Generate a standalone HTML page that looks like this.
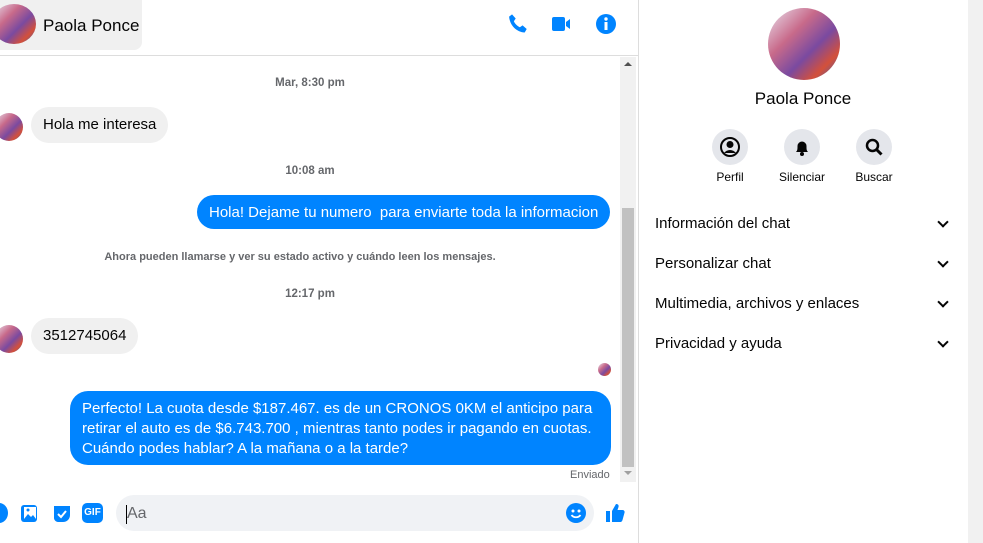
<!DOCTYPE html>
<html><head><meta charset="utf-8"><style>
*{margin:0;padding:0;box-sizing:border-box}
body{width:983px;height:543px;overflow:hidden;background:#fff;font-family:"Liberation Sans",sans-serif;position:relative;color:#050505}
.a{position:absolute}
.av{border-radius:50%;background:linear-gradient(135deg,#e9e3ef 0%,#c86a8a 35%,#7a4aa0 60%,#d4503a 80%,#3060c0 100%);overflow:hidden}
.bub{position:absolute;border-radius:18px;font-size:15px;line-height:20px;padding:8px 12px}
.in{background:#f0f0f0;color:#050505}
.out{background:#0084ff;color:#fff}
.ts{position:absolute;font-size:11.5px;color:#65676b;font-weight:bold;text-align:center;width:620px;left:0}
.row{position:absolute;left:655px;font-size:15px;color:#050505}
.chev{position:absolute;left:939px;width:8px;height:8px;border-right:2px solid #050505;border-bottom:2px solid #050505;transform:rotate(45deg)}
.btn{position:absolute;width:36px;height:36px;border-radius:50%;background:#e4e6eb;top:129px}
.lbl{position:absolute;top:170px;font-size:12px;color:#050505;text-align:center;width:80px}
</style></head><body>
<div class="a" style="left:0;top:0;width:142px;height:50px;background:#f0f0f0;border-radius:0 0 8px 0"></div>
<div class="a av" style="left:-8px;top:4px;width:44px;height:40px"></div>
<div class="a" style="left:43px;top:16px;font-size:17px">Paola Ponce</div>
<div class="a" style="left:0;top:55px;width:638px;height:1px;background:#ddd"></div>
<svg class="a" style="left:507px;top:13px" width="22" height="22" viewBox="0 0 24 24"><path fill="#0084ff" d="M5.5 1.5l4 4.5-2 3c1.2 2.8 3.7 5.3 6.5 6.5l3-2 4.5 4-2.2 3.8C10.5 21 3 13.5 2.3 4z"/></svg>
<svg class="a" style="left:551px;top:14px" width="22" height="20" viewBox="0 0 22 20"><rect x="1" y="3" width="13" height="14" rx="2" fill="#0084ff"/><path d="M15 8l4-3v10l-4-3z" fill="#0084ff"/></svg>
<svg class="a" style="left:595px;top:13px" width="22" height="22" viewBox="0 0 22 22"><circle cx="11" cy="11" r="10" fill="#0084ff"/><rect x="9.5" y="9" width="3" height="8" fill="#fff"/><circle cx="11" cy="6" r="1.7" fill="#fff"/></svg>
<div class="a" style="left:620px;top:57px;width:16px;height:425px;background:#f1f1f1"></div>
<div class="a" style="left:622px;top:208px;width:12px;height:259px;background:#c1c1c1"></div>
<div class="a" style="left:624px;top:62px;border:4px solid transparent;border-bottom:4px solid #505050;border-top:0"></div>
<div class="a" style="left:624px;top:471px;border:4px solid transparent;border-top:4px solid #a0a0a0;border-bottom:0"></div>
<div class="ts" style="top:77px">Mar, 8:30 pm</div>
<div class="a av" style="left:-5px;top:113px;width:28px;height:28px"></div>
<div class="bub in" style="left:31px;top:107px">Hola me interesa</div>
<div class="ts" style="top:165px">10:08 am</div>
<div class="bub out" style="left:197px;top:195px;height:34px">Hola! Dejame tu numero &nbsp;para enviarte toda la informacion</div>
<div class="ts" style="top:251px;font-size:11px;left:-10px">Ahora pueden llamarse y ver su estado activo y cuándo leen los mensajes.</div>
<div class="ts" style="top:288px">12:17 pm</div>
<div class="a av" style="left:-5px;top:325px;width:28px;height:28px"></div>
<div class="bub in" style="left:31px;top:318px">3512745064</div>
<div class="a av" style="left:598px;top:363px;width:13px;height:13px"></div>
<div class="bub out" style="left:70px;top:391px;width:541px;height:74px">Perfecto! La cuota desde $187.467. es de un CRONOS 0KM el anticipo para retirar el auto es de $6.743.700 , mientras tanto podes ir pagando en cuotas. Cuándo podes hablar? A la mañana o a la tarde?</div>
<div class="a" style="left:570px;top:469px;font-size:11px;color:#65676b">Enviado</div>
<div class="a" style="left:-10px;top:503px;width:18px;height:20px;border-radius:50%;background:#0084ff"></div>
<svg class="a" style="left:20px;top:503px" width="20" height="21" viewBox="0 0 20 21"><rect x="1" y="2" width="16" height="17" rx="3" fill="#0084ff"/><rect x="4" y="4" width="12" height="12" fill="#fff"/><path d="M4 16l4-5 3 3 2-2 3 4z" fill="#0084ff"/><circle cx="8" cy="7" r="1.5" fill="#0084ff"/></svg>
<svg class="a" style="left:52px;top:504px" width="20" height="20" viewBox="0 0 20 20"><path d="M2 2h16v9c0 4-3 7-7 7H6c-2 0-4-2-4-4z" fill="#0084ff"/><path d="M6 10l3 3 5-6" stroke="#fff" stroke-width="2" fill="none"/></svg>
<div class="a" style="left:82px;top:503px;width:21px;height:20px;border-radius:5px;background:#0084ff;color:#fff;font-size:10px;font-weight:bold;line-height:20px;text-align:center">GIF</div>
<div class="a" style="left:116px;top:495px;width:478px;height:36px;border-radius:18px;background:#f0f2f5"></div>
<div class="a" style="left:126px;top:505px;width:1px;height:19px;background:#000"></div>
<div class="a" style="left:127px;top:505px;font-size:16px;color:#65676b">Aa</div>
<svg class="a" style="left:565px;top:502px" width="22" height="22" viewBox="0 0 22 22"><circle cx="11" cy="11" r="10" fill="#0084ff"/><circle cx="8" cy="9" r="1.5" fill="#fff"/><circle cx="14" cy="9" r="1.5" fill="#fff"/><path d="M6.5 13c2 3 7 3 9 0" stroke="#fff" stroke-width="1.8" fill="none"/></svg>
<svg class="a" style="left:605px;top:502px" width="22" height="22" viewBox="0 0 22 22"><rect x="1" y="9" width="4" height="11" fill="#0084ff"/><path d="M7 9l4-7c2 0 3 1 2.5 3l-1 3h5c1.5 0 2.5 1.3 2 2.7l-2 7.3c-.3 1-1 2-2 2H7z" fill="#0084ff"/></svg>
<div class="a" style="left:638px;top:0;width:1px;height:543px;background:#ddd"></div>
<div class="a" style="left:968px;top:0;width:15px;height:543px;background:#f1f1f1"></div>
<div class="a av" style="left:768px;top:8px;width:72px;height:72px"></div>
<div class="a" style="left:638px;width:330px;top:89px;text-align:center;font-size:17px">Paola Ponce</div>
<div class="btn" style="left:712px"><svg width="36" height="36" viewBox="0 0 36 36"><circle cx="18" cy="18" r="9" fill="none" stroke="#050505" stroke-width="2"/><circle cx="18" cy="15.5" r="3.5" fill="#050505"/><path d="M12 24c3-4 9-4 12 0" fill="#050505"/></svg></div>
<div class="btn" style="left:784px"><svg width="36" height="36" viewBox="0 0 36 36"><path d="M12 23c1.5-1.5 1.5-3 1.5-6a4.5 4.5 0 019 0c0 3 0 4.5 1.5 6z" fill="#050505"/><circle cx="18" cy="25" r="2" fill="#050505"/></svg></div>
<div class="btn" style="left:856px"><svg width="36" height="36" viewBox="0 0 36 36"><circle cx="16.5" cy="16.5" r="5.5" fill="none" stroke="#050505" stroke-width="2.5"/><path d="M20.5 20.5l5 5" stroke="#050505" stroke-width="3"/></svg></div>
<div class="lbl" style="left:690px">Perfil</div>
<div class="lbl" style="left:762px">Silenciar</div>
<div class="lbl" style="left:834px">Buscar</div>
<div class="row" style="top:215px">Información del chat</div><div class="chev" style="top:218px"></div>
<div class="row" style="top:255px">Personalizar chat</div><div class="chev" style="top:258px"></div>
<div class="row" style="top:295px">Multimedia, archivos y enlaces</div><div class="chev" style="top:298px"></div>
<div class="row" style="top:335px">Privacidad y ayuda</div><div class="chev" style="top:338px"></div>
</body></html>
